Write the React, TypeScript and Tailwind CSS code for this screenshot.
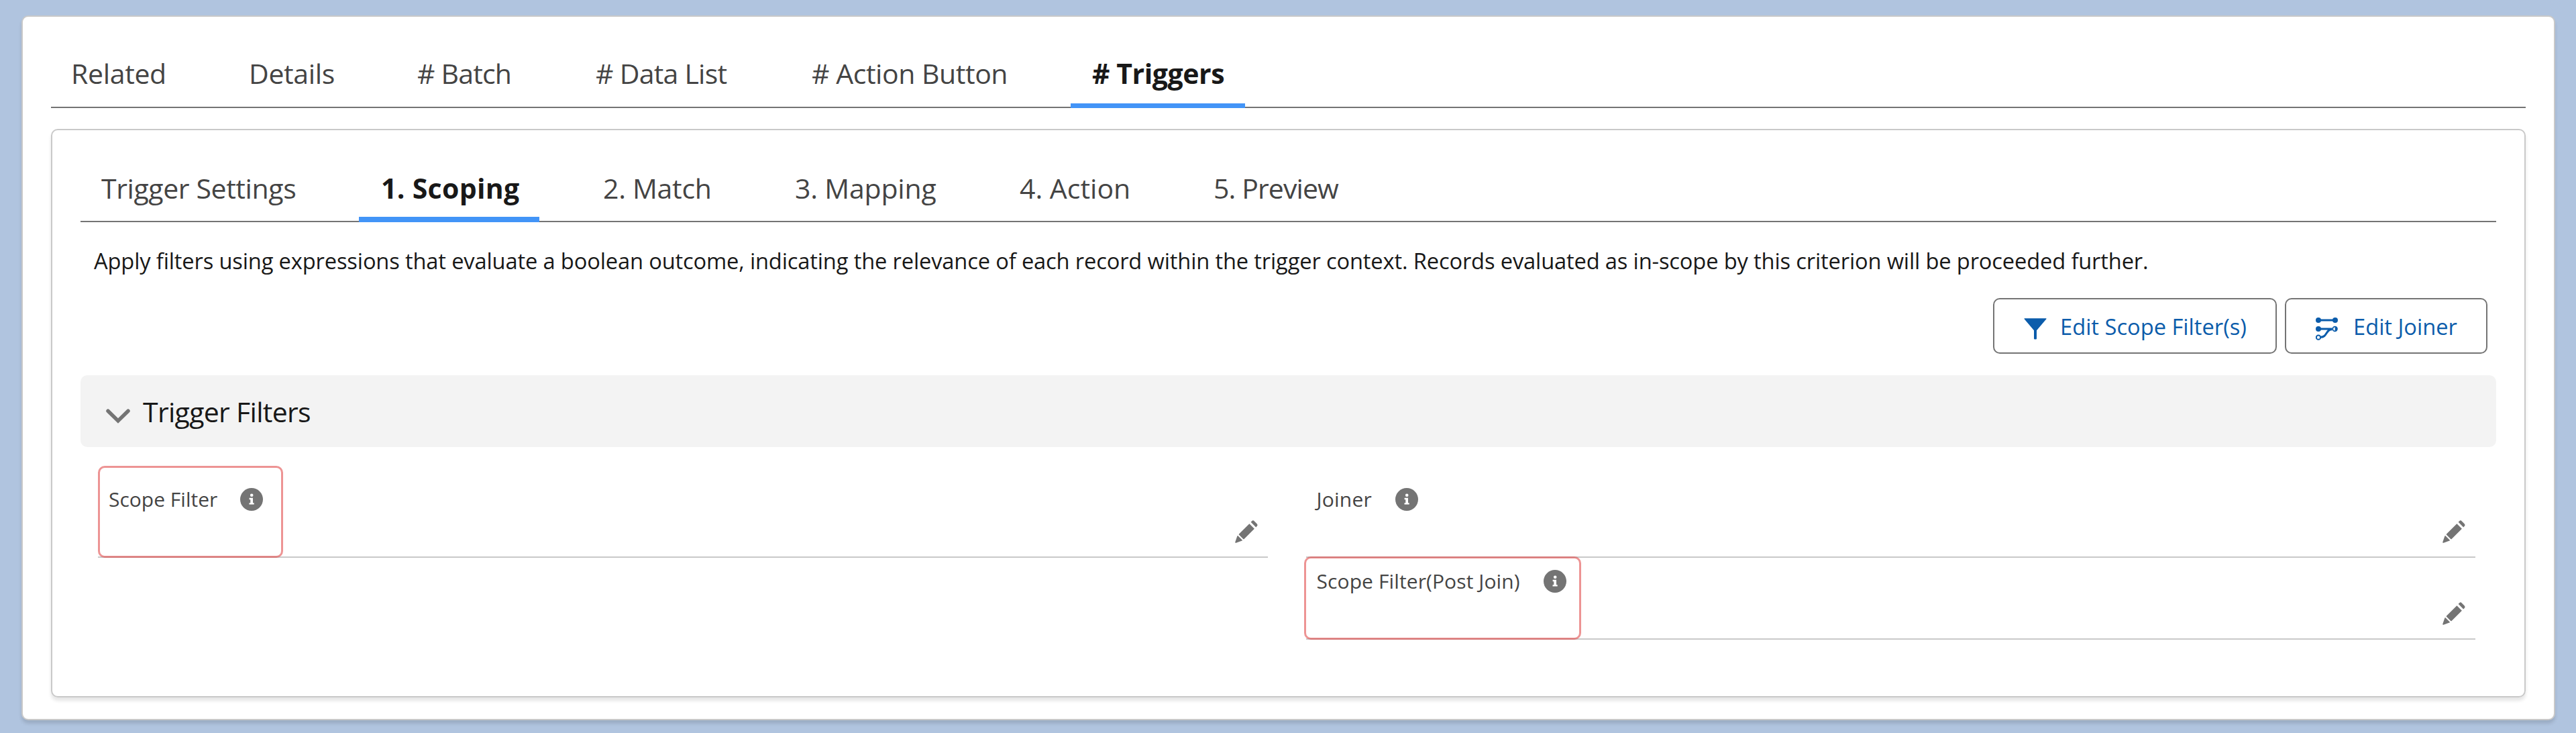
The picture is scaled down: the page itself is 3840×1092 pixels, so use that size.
type TabItem = { label: string; box: string; active?: boolean; bar?: string };

const recordTabs: TabItem[] = [
  { label: "Related", box: "w-[265px] tracking-[-0.33px]" },
  { label: "Details", box: "w-[251px] tracking-[-0.35px]" },
  { label: "# Batch", box: "w-[266px] tracking-[-0.8px]" },
  { label: "# Data List", box: "w-[322px] tracking-[-0.75px]" },
  { label: "# Action Button", box: "w-[418px] tracking-[-0.45px]" },
  { label: "# Triggers", box: "w-[204px] tracking-[-0.45px]", active: true, bar: "-left-[32px] w-[260px] h-[7px] -bottom-[2px]" },
];

const triggerTabs: TabItem[] = [
  { label: "Trigger Settings", box: "w-[417px] tracking-[-0.4px]" },
  { label: "1. Scoping", box: "w-[331px] tracking-[0.3px]", active: true, bar: "-left-[33px] w-[269px] h-[8px] -bottom-[2px]" },
  { label: "2. Match", box: "w-[286px] tracking-[-0.28px]" },
  { label: "3. Mapping", box: "w-[335px] tracking-[-0.2px]" },
  { label: "4. Action", box: "w-[289px]" },
  { label: "5. Preview", box: "w-[200px] tracking-[-0.9px]" },
];

function Tabs({ items, pad }: { items: TabItem[]; pad: string }) {
  return (
    <div className={`flex border-b-2 border-[#747474] text-[41px] ${pad}`}>
      {items.map((t) => (
        <div
          key={t.label}
          className={`relative shrink-0 whitespace-nowrap leading-[56px] ${t.box} ${t.active ? "font-bold text-[#181818]" : "text-[#444444]"}`}
        >
          {t.label}
          {t.active && <span className={`absolute bg-[#4294f7] ${t.bar}`} />}
        </div>
      ))}
    </div>
  );
}

function InfoIcon() {
  return (
    <svg viewBox="0 0 34 34" className="size-[34px] shrink-0">
      <circle cx="17" cy="17" r="17" fill="#747474" />
      <circle cx="17.2" cy="10.8" r="2.3" fill="#fff" />
      <path d="M13.6 14.8h5.4v7.4h1.7v2.4h-7.2v-2.4h1.8v-5h-1.7z" fill="#fff" />
    </svg>
  );
}

function PencilIcon() {
  return (
    <svg viewBox="0 0 36 36" className="size-[36px] shrink-0" fill="#747474">
      <path d="M26.2 2.2q1.7-1.7 3.4 0l4.2 4.2q1.7 1.7 0 3.4l-1.6 1.6-7.6-7.6z" />
      <path d="M22.4 6.2l7.5 7.5L14.6 29q-.7.7-1.4 0l-6.2-6.2q-.7-.7 0-1.4z" />
      <path d="M4.4 24.6q.5-1 1.3-.2l6 6q.8.8-.2 1.2L2.6 34.7q-1.7.5-1.3-1.3z" />
    </svg>
  );
}

function FunnelIcon() {
  return (
    <svg viewBox="0 0 34 32" className="h-[32px] w-[34px]" fill="#0b5cab">
      <path d="M1 .3h32q1 0 .4 1L19 18.300V30.600q0 .8-.8.8h-2.400q-.8 0-.8-.8V18.300L.6 1.300Q0 .3 1 .3z" />
    </svg>
  );
}

function JoinerIcon() {
  return (
    <svg viewBox="0 0 99 102" className="h-[34px] w-[33px]" fill="none" stroke="#0b5cab" strokeWidth="9">
      <path d="M12 12h74M12 51h62M22 88c30 0 22-35 52-35" />
      <g fill="#0b5cab" stroke="none">
        <circle cx="12" cy="12" r="12" />
        <circle cx="87" cy="12" r="12" />
        <circle cx="12" cy="51" r="12" />
      </g>
      <circle cx="86" cy="51" r="10" fill="#fff" strokeWidth="5" />
      <path d="M86 42a9 9 0 0 1 0 18z" fill="#0b5cab" stroke="none" />
      <circle cx="12" cy="89" r="9.500" fill="#fff" strokeWidth="6" />
    </svg>
  );
}

function Field({ label, height, pad, icon, mark }: { label: string; height: string; pad: string; icon: string; mark?: string }) {
  return (
    <div className={`relative flex items-start justify-between border-b-2 border-[#c9c9c9] pr-[14px] pl-[15px] ${height}`}>
      {mark && <span className={`absolute rounded-[10px] border-3 border-[#de3c3c]/55 ${mark}`} />}
      <div className={`flex items-center text-[30px] leading-[34px] whitespace-nowrap text-[#444444] ${pad}`}>
        <span className={`pt-[1px] pl-[1px] ${icon}`}>{label}</span>
        <InfoIcon />
      </div>
      <div className="self-end pb-[19px]">
        <PencilIcon />
      </div>
    </div>
  );
}

export default function App() {
  return (
    <div className="h-[1092px] w-[3840px] overflow-hidden bg-[#b0c4df] pt-[23px] pl-[32px] font-['Open_Sans',sans-serif] text-[#181818]">
      <main className="h-[1050px] w-[3777px] rounded-[10px] border-2 border-[#c9c9c9] bg-white px-[42px] shadow-[0_5px_5px_rgba(0,0,0,0.12)]">
        <Tabs items={recordTabs} pad="h-[136px] pt-[56px] pl-[30px]" />
        <section className="mt-[31px] h-[847px] rounded-[10px] border-2 border-[#c9c9c9] px-[42px] shadow-[0_5px_5px_rgba(0,0,0,0.1)]">
          <Tabs items={triggerTabs} pad="h-[137px] pt-[58px] pl-[31px]" />
          <p className="mt-[34px] pl-[20px] text-[32.67px] leading-[48px] tracking-[-0.15px] whitespace-nowrap">
            Apply filters using expressions that evaluate a boolean outcome, indicating the relevance of each record within the
            trigger context. Records evaluated as in-scope by this criterion will be proceeded further.
          </p>
          <div className="mt-[31px] flex justify-end gap-[12px] pr-[13px] text-[32.67px] leading-[48px] whitespace-nowrap text-[#0b5cab]">
            <button className="flex h-[83px] w-[423px] items-center gap-[20px] rounded-[10px] border-2 border-[#747474] pl-[44px]">
              <span className="pt-[8px]"><FunnelIcon /></span>
              <span className="pt-[2px]">Edit Scope Filter(s)</span>
            </button>
            <button className="flex h-[83px] w-[302px] items-center gap-[23px] rounded-[10px] border-2 border-[#747474] pl-[44px]">
              <span className="pt-[8px]"><JoinerIcon /></span>
              <span className="pt-[2px]">Edit Joiner</span>
            </button>
          </div>
          <h2 className="mt-[32px] flex h-[107px] items-center gap-[19px] rounded-[10px] bg-[#f3f3f3] pl-[38px] text-[41px] tracking-[-0.7px]">
            <svg viewBox="0 0 36 22" className="mt-[14px] h-[22px] w-[36px]" fill="none" stroke="#747474" strokeWidth="5.500" strokeLinecap="round">
              <path d="M3 3.200L18 18l15-14.800" />
            </svg>
            <span className="pt-[2px]">Trigger Filters</span>
          </h2>
          <div className="mt-[28px] grid grid-cols-2 items-start gap-x-[57px] pr-[31px] pl-[26px]">
            <Field label="Scope Filter" height="h-[137px]" pad="pt-[32px]" icon="w-[197px]" mark="left-0 top-0 h-[137px] w-[276px]" />
            <div>
              <Field label="Joiner" height="h-[137px]" pad="pt-[32px]" icon="w-[118px] tracking-[0.2px]" />
              <Field label="Scope Filter(Post Join)" height="h-[122px]" pad="pt-[17px]" icon="w-[339px] tracking-[0.1px]" mark="-left-[3px] -top-[2px] h-[124px] w-[413px]" />
            </div>
          </div>
        </section>
      </main>
    </div>
  );
}
